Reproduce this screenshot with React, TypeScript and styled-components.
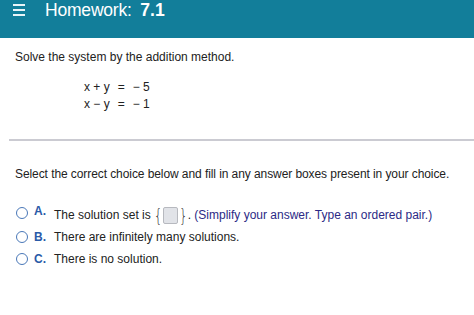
import React from "react";
import styled, { createGlobalStyle } from "styled-components";

const Global = createGlobalStyle`
  html, body { margin: 0; padding: 0; background: #fff; }
  body { font-family: "Liberation Sans", Arial, sans-serif; color: #222; }
`;

const Page = styled.div`
  width: 474px;
  height: 315px;
  overflow: hidden;
  background: #fff;
`;

const Header = styled.header`
  height: 38px;
  background: #127e9a;
  display: flex;
  align-items: flex-start;
  padding: 0 0 0 13px;
  box-sizing: border-box;
`;

const Burger = styled.div`
  width: 12px;
  margin-top: 4px;
  display: flex;
  flex-direction: column;
  gap: 3.5px;
  span { display: block; height: 1.5px; background: #e8f4f8; }
`;

const Title = styled.h1`
  margin: 0 0 0 20px;
  font-size: 17.5px;
  font-weight: normal;
  color: #fff;
  line-height: 20px;
  letter-spacing: -0.2px;
  b { font-weight: bold; margin-left: 4px; letter-spacing: 0; }
`;

const Body = styled.div`
  padding: 0 0 0 15px;
  font-size: 12px;
  color: #222;
`;

const Prompt = styled.p`
  margin: 0;
  padding-top: 12px;
  line-height: 15px;
`;

const Equations = styled.div`
  margin: 15px 0 0 69px;
  display: grid;
  grid-template-columns: auto auto auto;
  justify-content: start;
  column-gap: 8px;
  row-gap: 2px;
  line-height: 15px;
`;

const Divider = styled.hr`
  border: none;
  height: 2px;
  background: #cbcbd2;
  margin: 27px 0 0 -6px;
`;

const Instruction = styled.p`
  margin: 26px 0 0 0;
  line-height: 15px;
  letter-spacing: -0.08px;
`;

const Options = styled.div`
  margin-top: 18px;
  display: flex;
  flex-direction: column;
`;

const Option = styled.div<{ $h: number }>`
  display: flex;
  align-items: center;
  height: ${(p) => p.$h}px;
`;

const Radio = styled.span`
  width: 12px;
  height: 12px;
  border: 1.4px solid #4a78b8;
  border-radius: 50%;
  box-sizing: border-box;
  margin-left: 1px;
  flex: none;
`;

const Letter = styled.span<{ $raise?: boolean }>`
  color: #2a5aa8;
  font-weight: bold;
  width: 20px;
  margin-left: 6px;
  position: relative;
  top: ${(p) => (p.$raise ? "-2px" : "0")};
`;

const Text = styled.span<{ $drop?: boolean }>`
  position: relative;
  top: ${(p) => (p.$drop ? "2px" : "0")};
  display: flex;
  align-items: center;
`;

const Brace = styled.span`
  display: inline-block;
  font-family: "DejaVu Sans", sans-serif;
  font-weight: 200;
  font-size: 13px;
  color: #333;
  line-height: 13px;
  transform: scaleY(1.35);
`;

const AnswerBox = styled.span`
  display: inline-block;
  width: 13px;
  height: 15px;
  background: #e1e3e8;
  border: 1px solid #b7b9bf;
  border-radius: 2px;
  margin: 0 1px;
`;

const Hint = styled.span`
  color: #2c2a86;
`;

export default function App() {
  return (
    <Page>
      <Global />
      <Header>
        <Burger>
          <span />
          <span />
          <span />
        </Burger>
        <Title>
          Homework: <b>7.1</b>
        </Title>
      </Header>
      <Body>
        <Prompt>Solve the system by the addition method.</Prompt>
        <Equations>
          <span>x + y</span>
          <span>=</span>
          <span>− 5</span>
          <span>x − y</span>
          <span>=</span>
          <span>− 1</span>
        </Equations>
        <Divider />
        <Instruction>
          Select the correct choice below and fill in any answer boxes present in your choice.
        </Instruction>
        <Options>
          <Option $h={26}>
            <Radio />
            <Letter $raise>A.</Letter>
            <Text $drop>
              The solution set is&nbsp;<Brace>{"{"}</Brace>
              <AnswerBox />
              <Brace>{"}"}</Brace>.&nbsp;
              <Hint>(Simplify your answer. Type an ordered pair.)</Hint>
            </Text>
          </Option>
          <Option $h={22}>
            <Radio />
            <Letter>B.</Letter>
            <Text>There are infinitely many solutions.</Text>
          </Option>
          <Option $h={22}>
            <Radio />
            <Letter>C.</Letter>
            <Text>There is no solution.</Text>
          </Option>
        </Options>
      </Body>
    </Page>
  );
}
